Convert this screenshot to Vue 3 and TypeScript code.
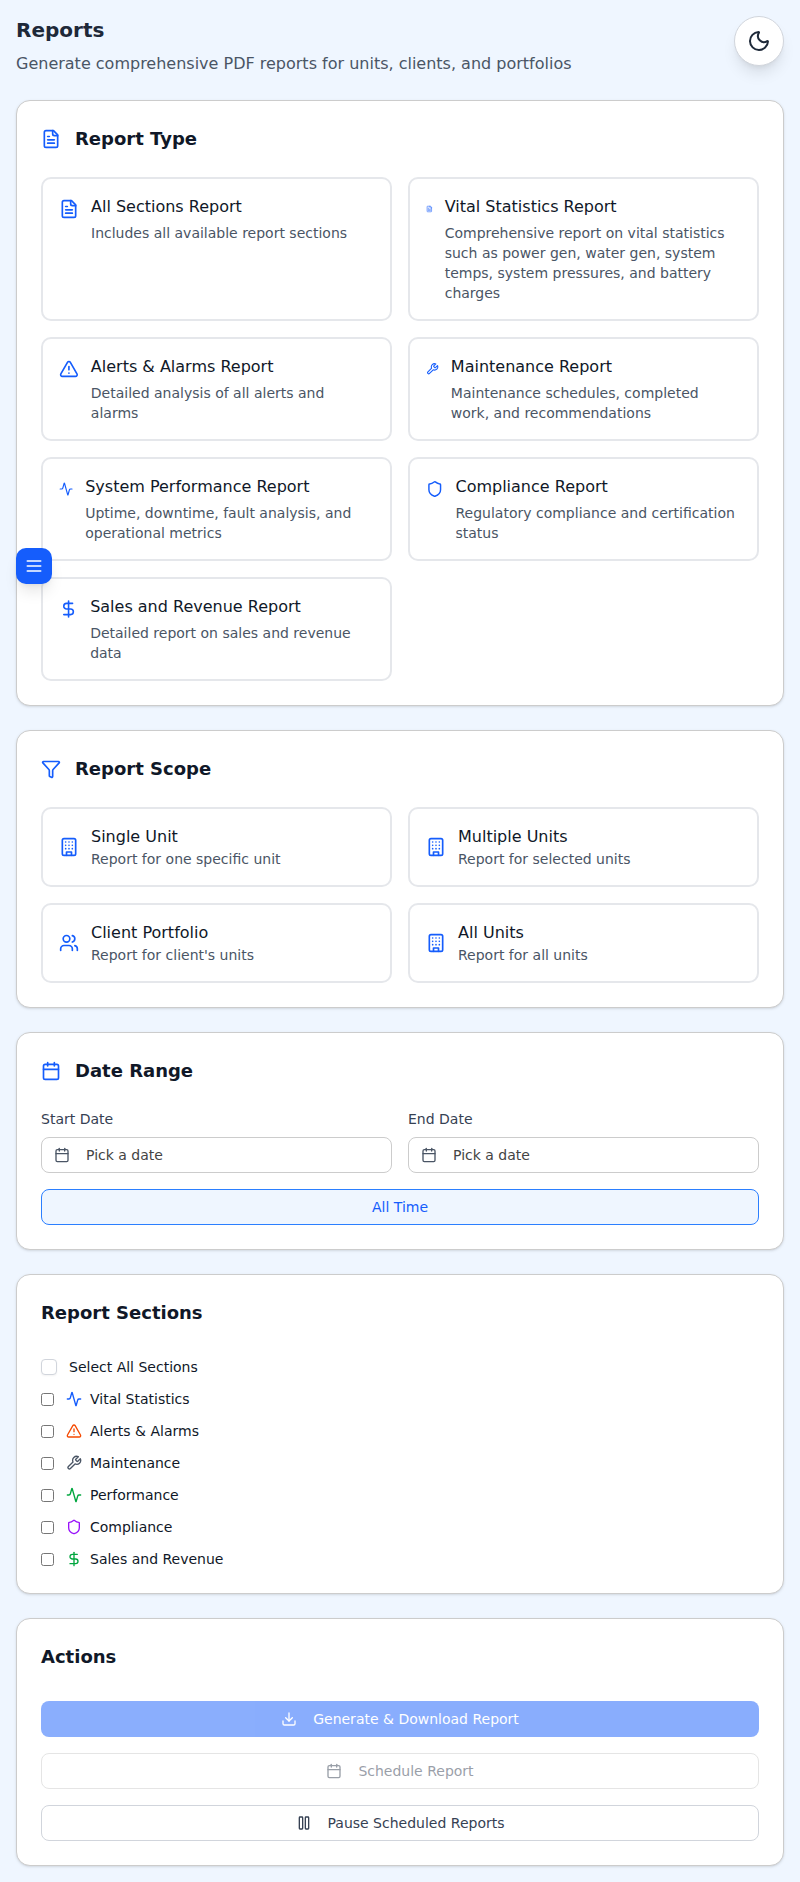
<script setup lang="ts">
import { defineComponent, h, ref } from 'vue'

type Shape = [string, Record<string, string>]

const p = (d: string): Shape => ['path', { d }]

const shapes: Record<string, Shape[]> = {
  file: [
    p('M15 2H6a2 2 0 0 0-2 2v16a2 2 0 0 0 2 2h12a2 2 0 0 0 2-2V7Z'),
    p('M14 2v4a2 2 0 0 0 2 2h4'),
    p('M10 9H8'),
    p('M16 13H8'),
    p('M16 17H8'),
  ],
  alert: [
    p('m21.73 18-8-14a2 2 0 0 0-3.48 0l-8 14A2 2 0 0 0 4 21h16a2 2 0 0 0 1.73-3'),
    p('M12 9v4'),
    p('M12 17h.01'),
  ],
  wrench: [
    p('M14.7 6.3a1 1 0 0 0 0 1.4l1.6 1.6a1 1 0 0 0 1.4 0l3.77-3.77a6 6 0 0 1-7.94 7.94l-6.91 6.91a2.12 2.12 0 0 1-3-3l6.91-6.91a6 6 0 0 1 7.94-7.94l-3.76 3.76z'),
  ],
  activity: [
    p('M22 12h-2.48a2 2 0 0 0-1.93 1.46l-2.35 8.36a.25.25 0 0 1-.48 0L9.24 2.18a.25.25 0 0 0-.48 0l-2.35 8.36A2 2 0 0 1 4.49 12H2'),
  ],
  shield: [
    p('M20 13c0 5-3.5 7.5-7.66 8.95a1 1 0 0 1-.67-.01C7.5 20.5 4 18 4 13V6a1 1 0 0 1 1-1c2 0 4.5-1.2 6.24-2.72a1.17 1.17 0 0 1 1.52 0C14.51 3.81 17 5 19 5a1 1 0 0 1 1 1z'),
  ],
  dollar: [p('M12 2v20'), p('M17 5H9.5a3.5 3.5 0 0 0 0 7h5a3.5 3.5 0 0 1 0 7H6')],
  filter: [
    p('M10 20a1 1 0 0 0 .553.895l2 1A1 1 0 0 0 14 21v-7a2 2 0 0 1 .517-1.341L21.74 4.67A1 1 0 0 0 21 3H3a1 1 0 0 0-.742 1.67l7.225 7.989A2 2 0 0 1 10 14z'),
  ],
  building: [
    ['rect', { width: '16', height: '20', x: '4', y: '2', rx: '2' }],
    p('M9 22v-4h6v4'),
    p('M8 6h.01M16 6h.01M12 6h.01M12 10h.01M12 14h.01M16 10h.01M16 14h.01M8 10h.01M8 14h.01'),
  ],
  users: [
    p('M16 21v-2a4 4 0 0 0-4-4H6a4 4 0 0 0-4 4v2'),
    p('M16 3.128a4 4 0 0 1 0 7.744'),
    p('M22 21v-2a4 4 0 0 0-3-3.87'),
    ['circle', { cx: '9', cy: '7', r: '4' }],
  ],
  calendar: [
    p('M8 2v4'),
    p('M16 2v4'),
    ['rect', { width: '18', height: '18', x: '3', y: '4', rx: '2' }],
    p('M3 10h18'),
  ],
  download: [p('M12 15V3'), p('M21 15v4a2 2 0 0 1-2 2H5a2 2 0 0 1-2-2v-4'), p('m7 10 5 5 5-5')],
  pause: [
    ['rect', { x: '14', y: '3', width: '5', height: '18', rx: '1' }],
    ['rect', { x: '5', y: '3', width: '5', height: '18', rx: '1' }],
  ],
  menu: [p('M4 6h16'), p('M4 12h16'), p('M4 18h16')],
  moon: [
    p('M20.985 12.486a9 9 0 1 1-9.473-9.472c.405-.022.617.46.402.803a6 6 0 0 0 8.268 8.268c.344-.215.825-.004.803.401'),
  ],
}

const Icon = defineComponent({
  props: { name: { type: String, required: true } },
  setup(props) {
    return () =>
      h(
        'svg',
        {
          viewBox: '0 0 24 24',
          fill: 'none',
          stroke: 'currentColor',
          'stroke-width': 2,
          'stroke-linecap': 'round',
          'stroke-linejoin': 'round',
          'aria-hidden': 'true',
        },
        shapes[props.name].map(([tag, attrs]) => h(tag, attrs)),
      )
  },
})

interface Option {
  icon: string
  title: string
  text: string
}

const reportTypes: Option[] = [
  { icon: 'file', title: 'All Sections Report', text: 'Includes all available report sections' },
  {
    icon: 'file',
    title: 'Vital Statistics Report',
    text: 'Comprehensive report on vital statistics such as power gen, water gen, system temps, system pressures, and battery charges',
  },
  { icon: 'alert', title: 'Alerts & Alarms Report', text: 'Detailed analysis of all alerts and alarms' },
  { icon: 'wrench', title: 'Maintenance Report', text: 'Maintenance schedules, completed work, and recommendations' },
  { icon: 'activity', title: 'System Performance Report', text: 'Uptime, downtime, fault analysis, and operational metrics' },
  { icon: 'shield', title: 'Compliance Report', text: 'Regulatory compliance and certification status' },
  { icon: 'dollar', title: 'Sales and Revenue Report', text: 'Detailed report on sales and revenue data' },
]

const scopes: Option[] = [
  { icon: 'building', title: 'Single Unit', text: 'Report for one specific unit' },
  { icon: 'building', title: 'Multiple Units', text: 'Report for selected units' },
  { icon: 'users', title: 'Client Portfolio', text: "Report for client's units" },
  { icon: 'building', title: 'All Units', text: 'Report for all units' },
]

const sections = ref([
  { icon: 'activity', label: 'Vital Statistics', tone: 'blue', checked: false },
  { icon: 'alert', label: 'Alerts & Alarms', tone: 'orange', checked: false },
  { icon: 'wrench', label: 'Maintenance', tone: 'gray', checked: false },
  { icon: 'activity', label: 'Performance', tone: 'green', checked: false },
  { icon: 'shield', label: 'Compliance', tone: 'purple', checked: false },
  { icon: 'dollar', label: 'Sales and Revenue', tone: 'green', checked: false },
])

function selectAll() {
  const next = !sections.value.every((s) => s.checked)
  sections.value.forEach((s) => (s.checked = next))
}
</script>

<template>
  <main class="page">
    <header class="header">
      <div>
        <h1>Reports</h1>
        <p>Generate comprehensive PDF reports for units, clients, and portfolios</p>
      </div>
      <button class="theme" aria-label="Toggle theme"><Icon name="moon" class="i24" /></button>
    </header>

    <section class="card">
      <h2><Icon name="file" class="i20 blue" />Report Type</h2>
      <div class="grid">
        <button v-for="t in reportTypes" :key="t.title" class="option">
          <Icon :name="t.icon" class="i20 blue lead" />
          <span class="copy">
            <span class="name">{{ t.title }}</span>
            <span class="desc spaced">{{ t.text }}</span>
          </span>
        </button>
      </div>
    </section>

    <section class="card">
      <h2><Icon name="filter" class="i20 blue" />Report Scope</h2>
      <div class="grid">
        <button v-for="s in scopes" :key="s.title" class="option centered">
          <Icon :name="s.icon" class="i20 blue" />
          <span class="copy">
            <span class="name">{{ s.title }}</span>
            <span class="desc">{{ s.text }}</span>
          </span>
        </button>
      </div>
    </section>

    <section class="card">
      <h2><Icon name="calendar" class="i20 blue" />Date Range</h2>
      <div class="grid">
        <div v-for="label in ['Start Date', 'End Date']" :key="label" class="field">
          <span class="label">{{ label }}</span>
          <button class="btn picker"><Icon name="calendar" class="i16 gray" />Pick a date</button>
        </div>
      </div>
      <button class="btn all-time">All Time</button>
    </section>

    <section class="card loose">
      <h2>Report Sections</h2>
      <div class="checks">
        <div class="check">
          <button class="box" role="checkbox" aria-label="Select All Sections" @click="selectAll"></button>
          <span>Select All Sections</span>
        </div>
        <label v-for="s in sections" :key="s.label" class="check">
          <input v-model="s.checked" type="checkbox" />
          <span class="tag"><Icon :name="s.icon" class="i16" :class="s.tone" />{{ s.label }}</span>
        </label>
      </div>
    </section>

    <section class="card loose">
      <h2>Actions</h2>
      <div class="actions">
        <button class="btn primary"><Icon name="download" class="i16" />Generate &amp; Download Report</button>
        <button class="btn schedule"><Icon name="calendar" class="i16" />Schedule Report</button>
        <button class="btn outline"><Icon name="pause" class="i16" />Pause Scheduled Reports</button>
      </div>
    </section>

    <button class="menu" aria-label="Open menu"><Icon name="menu" class="i20" /></button>
  </main>
</template>

<style>
body {
  margin: 0;
  background: #eff6ff;
}
</style>

<style scoped>
.page {
  position: relative;
  box-sizing: border-box;
  min-height: 1882px;
  padding: 16px;
  display: flex;
  flex-direction: column;
  gap: 24px;
  background: #eff6ff;
  color: #101828;
  font-family: 'DejaVu Sans', sans-serif;
  font-size: 14px;
  line-height: 20px;
}
button {
  box-sizing: border-box;
  margin: 0;
  font: inherit;
  color: inherit;
  text-align: left;
}
.header {
  display: flex;
  justify-content: space-between;
  align-items: flex-start;
  height: 60px;
}
h1 {
  margin: 0 0 8px;
  font-size: 20px;
  line-height: 28px;
  color: #1e2939;
}
.header p {
  margin: 0;
  font-size: 16px;
  line-height: 24px;
  color: #4a5565;
}
.theme {
  width: 50px;
  height: 50px;
  padding: 0;
  display: flex;
  align-items: center;
  justify-content: center;
  border: 1px solid #d1d5dc;
  border-radius: 50%;
  background: #fff;
  color: #1e2939;
  box-shadow: 0 10px 15px -3px rgba(0, 0, 0, 0.1), 0 4px 6px -4px rgba(0, 0, 0, 0.1);
}
.card {
  padding: 24px;
  border: 1px solid #ccc;
  border-radius: 14px;
  background: #fff;
  box-shadow: 0 1px 3px rgba(0, 0, 0, 0.1), 0 1px 2px -1px rgba(0, 0, 0, 0.1);
}
h2 {
  margin: 0 0 24px;
  display: flex;
  align-items: center;
  gap: 14px;
  font-size: 18px;
  line-height: 28px;
}
.loose h2 {
  margin-bottom: 30px;
}
.grid {
  display: grid;
  grid-template-columns: 1fr 1fr;
  gap: 16px;
}
.option {
  display: flex;
  align-items: flex-start;
  gap: 12px;
  padding: 16px;
  border: 2px solid #e5e7eb;
  border-radius: 10px;
  background: #fff;
}
.option.centered {
  align-items: center;
}
.copy {
  min-width: 0;
}
.lead {
  margin-top: 4px;
}
.name {
  display: block;
  font-size: 16px;
  line-height: 24px;
}
.desc {
  display: block;
  color: #4a5565;
}
.spaced {
  margin-top: 4px;
}
.i16,
.i20,
.i24 {
  display: block;
  min-width: 0;
}
.i16 {
  width: 16px;
  height: 16px;
}
.i20 {
  width: 20px;
  height: 20px;
}
.i24 {
  width: 24px;
  height: 24px;
}
.blue {
  color: #155dfc;
}
.orange {
  color: #f54900;
}
.gray {
  color: #4a5565;
}
.green {
  color: #00a63e;
}
.purple {
  color: #9810fa;
}
.field {
  display: flex;
  flex-direction: column;
  gap: 8px;
}
.label {
  color: #364153;
}
.btn {
  display: flex;
  align-items: center;
  justify-content: center;
  gap: 16px;
  width: 100%;
  height: 36px;
  padding: 0 12px;
  border: 1px solid #d1d5dc;
  border-radius: 8px;
  background: #fff;
  color: #364153;
}
.picker {
  justify-content: flex-start;
  border-color: #ccc;
  color: #444;
}
.all-time {
  margin-top: 16px;
  border-color: #2b7fff;
  background: #eff6ff;
  color: #155dfc;
}
.checks {
  display: flex;
  flex-direction: column;
  gap: 12px;
}
.check {
  display: flex;
  align-items: center;
  gap: 12px;
  height: 20px;
}
.check input {
  margin: 0;
}
.tag {
  display: flex;
  align-items: center;
  gap: 8px;
}
.box {
  width: 16px;
  height: 16px;
  padding: 0;
  border: 1px solid #d1d5dc;
  border-radius: 4px;
  background: #fff;
  box-shadow: 0 1px 2px rgba(0, 0, 0, 0.05);
}
.actions {
  display: flex;
  flex-direction: column;
  gap: 16px;
}
.primary {
  border: 0;
  background: #155dfc;
  color: #fff;
  opacity: 0.5;
}
.schedule {
  border-color: #ccc;
  opacity: 0.5;
}
.menu {
  position: absolute;
  left: 16px;
  top: 548px;
  width: 36px;
  height: 36px;
  padding: 0;
  display: flex;
  align-items: center;
  justify-content: center;
  border: 0;
  border-radius: 10px;
  background: #155dfc;
  color: #fff;
  box-shadow: 0 10px 15px -3px rgba(0, 0, 0, 0.1), 0 4px 6px -4px rgba(0, 0, 0, 0.1);
}
</style>
